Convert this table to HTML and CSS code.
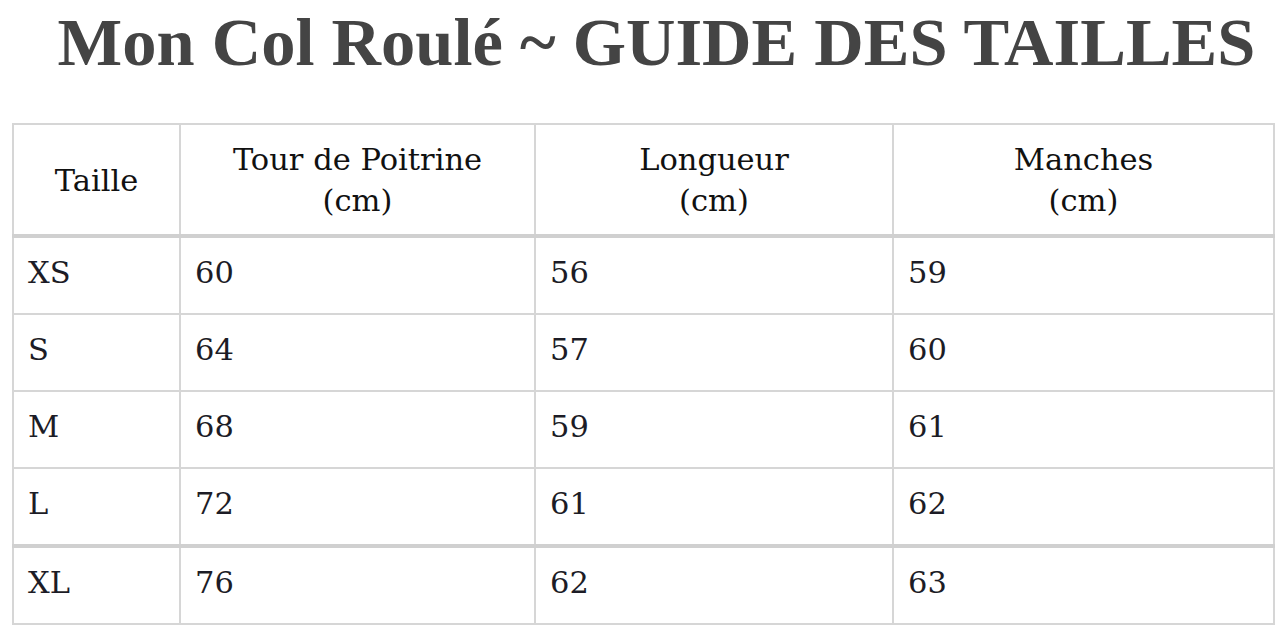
FILE: index.html
```html
<!DOCTYPE html>
<html lang="fr">
<head>
<meta charset="utf-8">
<title>Mon Col Roulé ~ Guide des tailles</title>
<link rel="stylesheet" href="styles.css">
</head>
<body>
<div class="page">
  <h1 class="title">Mon Col Roulé ~ GUIDE DES TAILLES</h1>
  <table class="sizes">
    <colgroup>
      <col class="c1"><col class="c2"><col class="c3"><col class="c4">
    </colgroup>
    <thead>
      <tr>
        <th>Taille</th>
        <th>Tour de Poitrine<br>(cm)</th>
        <th>Longueur<br>(cm)</th>
        <th>Manches<br>(cm)</th>
      </tr>
    </thead>
    <tbody>
      <tr><td>XS</td><td>60</td><td>56</td><td>59</td></tr>
      <tr><td>S</td><td>64</td><td>57</td><td>60</td></tr>
      <tr><td>M</td><td>68</td><td>59</td><td>61</td></tr>
      <tr><td>L</td><td>72</td><td>61</td><td>62</td></tr>
      <tr class="split"><td>XL</td><td>76</td><td>62</td><td>63</td></tr>
    </tbody>
  </table>
</div>
</body>
</html>
```

FILE: styles.css
```css
html, body {
  margin: 0;
  padding: 0;
  background: #ffffff;
}

.page {
  padding: 0 11px 0 12px;
}

.title {
  margin: 0;
  height: 123px;
  padding: 2px 0 0 28px;
  box-sizing: border-box;
  text-align: center;
  font-family: "Liberation Serif", "DejaVu Serif", serif;
  font-size: 68.5px;
  line-height: 80px;
  font-weight: bold;
  color: #444444;
}

.sizes {
  width: 1261px;
  border-collapse: collapse;
  table-layout: fixed;
  color: #1c1c26;
  font-family: "DejaVu Serif", "Liberation Serif", serif;
  font-size: 30.5px;
}

.c1 { width: 167px; }
.c2 { width: 355px; }
.c3 { width: 358px; }
.c4 { width: 381px; }

.sizes th,
.sizes td {
  border: 2px solid #d6d6d6;
}

.sizes th {
  font-weight: normal;
  text-align: center;
  line-height: 41px;
  padding: 14px 8px 12.5px;
  vertical-align: middle;
  color: #111111;
}

.sizes thead th {
  border-bottom: 4px solid #d0d0d0;
}

.sizes td {
  text-align: left;
  line-height: 41px;
  padding: 14px 14px 20px;
  vertical-align: middle;
}

.sizes tr.split td {
  border-top: 4px solid #d0d0d0;
}
```
